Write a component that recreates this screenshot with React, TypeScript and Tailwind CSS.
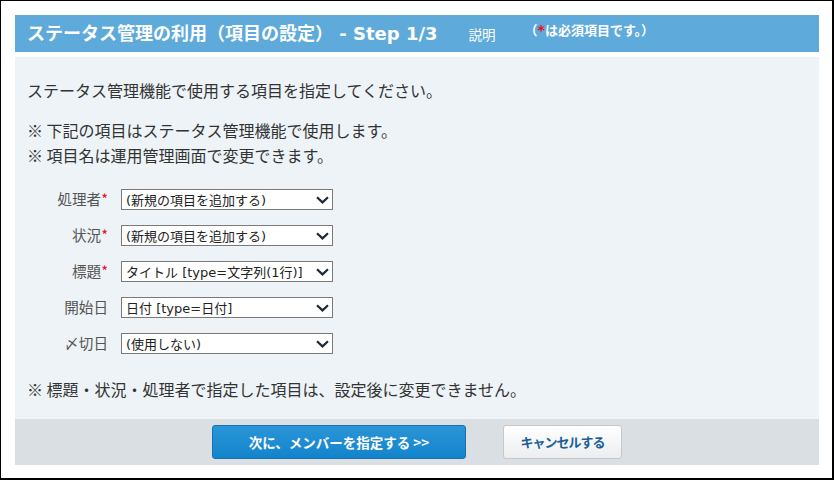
import { ReactNode } from "react";

type Field = {
  label: string;
  required: boolean;
  value: string;
};

const fields: Field[] = [
  { label: "処理者", required: true, value: "(新規の項目を追加する)" },
  { label: "状況", required: true, value: "(新規の項目を追加する)" },
  { label: "標題", required: true, value: "タイトル [type=文字列(1行)]" },
  { label: "開始日", required: false, value: "日付 [type=日付]" },
  { label: "〆切日", required: false, value: "(使用しない)" },
];

const Chevron = () => (
  <svg width="13" height="8" viewBox="0 0 13 8" fill="none">
    <path d="M1 1.2 L6.5 6.4 L12 1.2" stroke="#1e2a38" strokeWidth="2.2" strokeLinejoin="miter" />
  </svg>
);

const FakeSelect = ({ children }: { children: ReactNode }) => (
  <div className="flex h-[21px] w-[212px] items-center justify-between border border-[#7a7a7a] bg-white pl-[4px] pr-[3px] font-['DejaVu_Sans','Noto_Sans_CJK_JP',sans-serif] text-[13px] leading-[19px] text-[#222]">
    <span className="whitespace-nowrap pt-[1px]">{children}</span>
    <Chevron />
  </div>
);

export default function App() {
  return (
    <div className="h-[480px] w-[834px] border-t border-l border-r-2 border-b-2 border-black bg-white pt-[14px] pl-[14px] pr-[13px] font-['Noto_Sans_CJK_JP',sans-serif]">
      {/* header */}
      <div className="flex h-[37px] items-center bg-[#5eaadb] pl-[12px] text-white">
        <h1 className="whitespace-nowrap font-['DejaVu_Sans','Noto_Sans_CJK_JP',sans-serif] text-[18px] font-bold leading-none">
          ステータス管理の利用（項目の設定） - Step 1/3
        </h1>
        <span className="ml-[31px] mt-[3px] text-[13.5px] leading-none">説明</span>
        <span className="ml-[29px] mb-[7px] whitespace-nowrap text-[13px] font-bold leading-none">
          （<span className="font-['DejaVu_Sans'] text-[14px] text-[#e8101a]">*</span>は必須項目です。）
        </span>
      </div>

      {/* body */}
      <div className="mt-[5px] h-[362px] bg-[#eef3f7] pl-[12px] pt-[21px] text-[16px] leading-[24px] text-[#333]">
        <p>ステータス管理機能で使用する項目を指定してください。</p>
        <div className="mt-[16px]">
          <p className="leading-[25px]">※&nbsp;下記の項目はステータス管理機能で使用します。</p>
          <p className="leading-[25px]">※&nbsp;項目名は運用管理画面で変更できます。</p>
        </div>

        <div className="mt-[21px] flex flex-col gap-[15px]">
          {fields.map((f) => (
            <div key={f.label} className="flex items-center gap-[13px]">
              <div className="w-[81px] text-right text-[14.6px] leading-none text-[#555]">
                {f.label}
                {f.required && <span className="text-[#e8101a]">*</span>}
              </div>
              <FakeSelect>{f.value}</FakeSelect>
            </div>
          ))}
        </div>

        <p className="mt-[23px]">※&nbsp;標題・状況・処理者で指定した項目は、設定後に変更できません。</p>
      </div>

      {/* footer */}
      <div className="flex h-[46px] items-start justify-center gap-[37px] bg-[#dadfe3] pt-[6px]">
        <button className="h-[34px] w-[254px] rounded-[3px] border border-[#1b6fae] bg-gradient-to-b from-[#2a95d8] to-[#1184cc] text-[13.5px] font-bold text-white">
          次に、メンバーを指定する &gt;&gt;
        </button>
        <button className="h-[34px] w-[119px] rounded-[3px] border border-[#c4c8cc] bg-gradient-to-b from-white to-[#eceeef] text-[13px] font-bold tracking-[-1px] text-[#1b5f95]">
          キャンセルする
        </button>
      </div>
    </div>
  );
}
